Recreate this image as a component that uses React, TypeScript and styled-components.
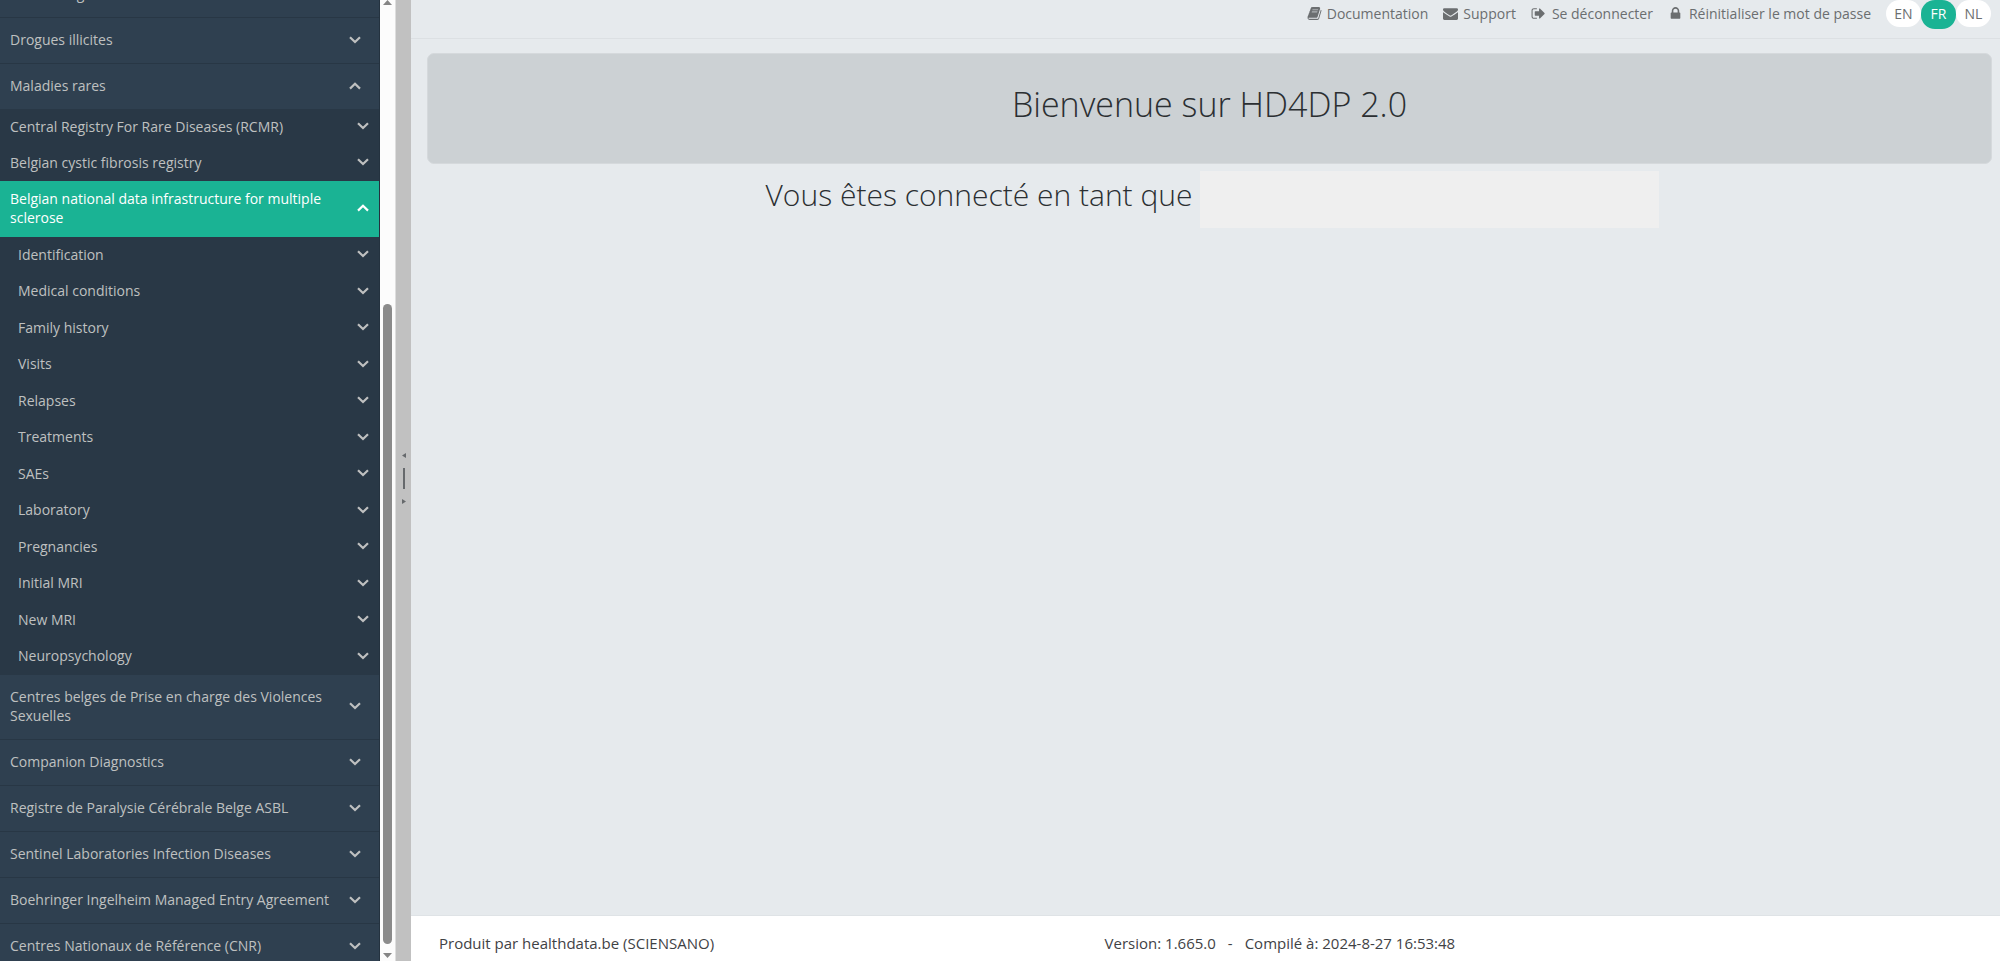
import React, { useLayoutEffect, useRef } from "react";
import styled, { createGlobalStyle } from "styled-components";

const GlobalStyle = createGlobalStyle`
  * { box-sizing: border-box; }
  body {
    margin: 0;
    overflow: hidden;
    background: #e6eaed;
    color: #3f4245;
    font-family: "Open Sans", "Liberation Sans", sans-serif;
    font-size: 14px;
    line-height: 20px;
  }
  button { font: inherit; }
  ul { list-style: none; margin: 0; padding: 0; }
`;

const Layout = styled.div`
  display: grid;
  grid-template-columns: 380px 16px 15px minmax(0, 1fr);
  height: 100vh;
`;

const Sidebar = styled.nav`
  overflow-y: auto;
  scrollbar-width: none;
  background: #2f4050;
  border-right: 1px solid #24323f;
`;

const GroupItem = styled.li`
  border-bottom: 1px solid #283745;
`;

const Submenu = styled.ul`
  background: #293846;
`;

const EntryList = styled.ul`
  display: grid;
  grid-auto-rows: 1fr;
  min-height: 438px;
`;

const NavButton = styled.button<{ $level: "group" | "registry" | "entry"; $active?: boolean }>`
  display: flex;
  align-items: center;
  justify-content: space-between;
  gap: 16px;
  width: 100%;
  height: ${(p) => (p.$level === "entry" ? "100%" : "auto")};
  min-height: ${(p) => (p.$active ? "56px" : p.$level === "group" ? "45px" : "36px")};
  padding: ${(p) =>
    p.$level === "group" ? "12px 18px 14px 10px" : p.$level === "registry" ? "7px 10px 9px 10px" : "7px 10px 9px 18px"};
  border: 0;
  background: ${(p) => (p.$active ? "#1ab394" : "transparent")};
  color: ${(p) => (p.$active ? "#ffffff" : "#bfc0c0")};
  font-size: 14px;
  line-height: 19px;
  text-align: left;
  cursor: pointer;

  svg { flex: none; }
`;

const ScrollTrack = styled.div`
  display: flex;
  flex-direction: column;
  align-items: center;
  justify-content: space-between;
  background: #fcfcfc;
  border-right: 1px solid #dedede;
`;

const ScrollThumb = styled.div`
  flex: 1;
  width: 9px;
  margin: 298px 0 8px;
  border-radius: 5px;
  background: #8b8b8b;
`;

const Splitter = styled.div`
  display: flex;
  flex-direction: column;
  align-items: center;
  justify-content: center;
  gap: 10px;
  padding-bottom: 4px;
  background: #c1c1c1;
  cursor: col-resize;
`;

const Grip = styled.span`
  width: 2px;
  height: 21px;
  background: #66696c;
`;

const Content = styled.div`
  display: flex;
  flex-direction: column;
  min-width: 0;
`;

const TopBar = styled.header`
  display: flex;
  align-items: flex-start;
  justify-content: flex-end;
  height: 39px;
  padding-right: 9px;
  border-bottom: 1px solid #dce0e3;
`;

const TopLink = styled.a<{ $gap: number }>`
  display: flex;
  align-items: center;
  gap: ${(p) => p.$gap}px;
  height: 27px;
  margin-right: 15px;
  color: #6b6e70;
  font-size: 14px;
  text-decoration: none;
  white-space: nowrap;
`;

const Languages = styled.div`
  display: flex;
  align-items: flex-start;
`;

const LanguageButton = styled.button<{ $active?: boolean }>`
  width: 35px;
  height: ${(p) => (p.$active ? 29 : 27)}px;
  padding: ${(p) => (p.$active ? "1px 0 2px" : "1px 0 0")};
  border: 0;
  border-radius: 14px;
  background: ${(p) => (p.$active ? "#1ab394" : "#ffffff")};
  color: ${(p) => (p.$active ? "#ffffff" : "#6b6e70")};
  font-size: 14px;
  line-height: 26px;
  cursor: pointer;
`;

const Main = styled.main`
  flex: 1;
  padding: 14px 8px 0 16px;
  text-align: center;
`;

const Banner = styled.section`
  padding: 26px 16px 35px;
  border: 1px solid #d5d9dc;
  border-radius: 7px;
  background: #ccd1d4;
`;

const Title = styled.h1`
  margin: 0;
  color: #2b2f32;
  font-size: 34px;
  font-weight: 300;
  line-height: 48px;
`;

const Greeting = styled.h2`
  display: flex;
  align-items: flex-start;
  justify-content: center;
  gap: 8px;
  margin: 7px 0 0;
  padding-left: 6px;
  color: #2b2f32;
  font-size: 30px;
  font-weight: 300;
  line-height: 48px;
`;

const UserName = styled.span`
  width: 459px;
  height: 57px;
  background: #efefef;
`;

const Footer = styled.footer`
  display: grid;
  grid-template-columns: 3fr 4fr;
  align-items: center;
  height: 46px;
  padding: 9px 8px 0 28px;
  border-top: 1px solid #dfe3e6;
  background: #ffffff;
  font-size: 15px;
`;

const BuildInfo = styled.div`
  display: flex;
  gap: 12px;
`;

const Chevron = ({ up }: { up?: boolean }) => (
  <svg width="12" height="8" viewBox="0 0 12 8" fill="none" stroke="currentColor" strokeWidth="2.2" aria-hidden="true">
    <path d={up ? "M1 6.6L6 1.8L11 6.6" : "M1 1.2L6 6L11 1.2"} />
  </svg>
);

const Triangle = ({ points, width, height, color }: { points: string; width: number; height: number; color: string }) => (
  <svg width={width} height={height} aria-hidden="true">
    <polygon points={points} fill={color} />
  </svg>
);

const iconPaths = {
  book: "M1703 478q40 57 18 129l-275 906q-19 64-76.5 107.5t-122.5 43.5h-923q-77 0-148.5-53.5t-99.5-131.5q-24-67-2-127 0-4 3-27t4-37q1-8-3-21.5t-3-19.5q2-11 8-21t16.5-23.5 16.5-23.5q23-38 45-91.5t30-91.5q3-10 .5-30t-.5-28q3-11 17-28t17-23q21-36 42-92t25-90q1-9-2.5-32t.5-28q4-13 22-30.5t22-22.5q19-26 42.5-84.5t27.5-96.5q1-8-3-25.5t-2-26.5q2-8 9-18t18-23 17-21q8-12 16.5-30.5t15-35 16-36 19.5-32 26.5-23.5 36-11.5 47.5 5.5l-1 3q38-9 51-9h761q74 0 114 56t18 130l-274 906q-36 119-71.5 153.5t-128.5 34.5h-869q-27 0-38 15-11 16-1 43 24 70 144 70h923q29 0 56-15.5t35-41.5l300-987q7-22 5-57 38 15 59 43zm-1064 2q-4 13 2 22.5t20 9.5h608q13 0 25.5-9.5t16.5-22.5l21-64q4-13-2-22.5t-20-9.5h-608q-13 0-25.5 9.5t-16.5 22.5zm-83 256q-4 13 2 22.5t20 9.5h608q13 0 25.5-9.5t16.5-22.5l21-64q4-13-2-22.5t-20-9.5h-608q-13 0-25.5 9.5t-16.5 22.5z",
  envelope: "M1792 710v794q0 66-47 113t-113 47h-1472q-66 0-113-47t-47-113v-794q44 49 101 87 362 246 497 345 57 42 92.5 65.5t94.5 48 110 24.5h2q51 0 110-24.5t94.5-48 92.5-65.5q170-123 498-345 57-39 100-87zm0-294q0 79-49 151t-122 123q-376 261-468 325-10 7-42.5 31t-54 38.5-52 32.5-57.5 27-50 9h-2q-23 0-50-9t-57.5-27-52-32.5-54-38.5-42.5-31q-91-64-262-182.5t-205-142.5q-62-42-117-115.5t-55-136.5q0-78 41.5-130t118.5-52h1472q65 0 112.5 47t47.5 113z",
  signOut: "M704 1440q0 4 1 20t.5 26.5-3 23.5-10 19.5-20.5 6.5h-320q-119 0-203.5-84.5t-84.5-203.5v-704q0-119 84.5-203.5t203.5-84.5h320q13 0 22.5 9.5t9.5 22.5q0 4 1 20t.5 26.5-3 23.5-10 19.5-20.5 6.5h-320q-66 0-113 47t-47 113v704q0 66 47 113t113 47h312l11.5 1 11.5 3 8 5.5 7 9 2 13.5zm928-544q0 26-19 45l-544 544q-19 19-45 19t-45-19-19-45v-288h-448q-26 0-45-19t-19-45v-384q0-26 19-45t45-19h448v-288q0-26 19-45t45-19 45 19l544 544q19 19 19 45z",
  lock: "M640 768h512v-192q0-106-75-181t-181-75-181 75-75 181v192zm832 96v576q0 40-28 68t-68 28h-960q-40 0-68-28t-28-68v-576q0-40 28-68t68-28h32v-192q0-184 132-316t316-132 316 132 132 316v192h32q40 0 68 28t28 68z",
};

const Icon = ({ name }: { name: keyof typeof iconPaths }) => (
  <svg width="15" height="15" viewBox="0 0 1792 1792" fill="currentColor" aria-hidden="true">
    {name === "book" && <path d="M640 256h860l-330 1060h-880z" opacity="0.45" />}
    <path d={iconPaths[name]} />
  </svg>
);

const topLinks: { label: string; icon: keyof typeof iconPaths; gap: number }[] = [
  { label: "Documentation", icon: "book", gap: 5 },
  { label: "Support", icon: "envelope", gap: 5 },
  { label: "Se déconnecter", icon: "signOut", gap: 6 },
  { label: "Réinitialiser le mot de passe", icon: "lock", gap: 6 },
];

const languages = ["EN", "FR", "NL"];

const registries = ["Central Registry For Rare Diseases (RCMR)", "Belgian cystic fibrosis registry"];

const entries = [
  "Identification",
  "Medical conditions",
  "Family history",
  "Visits",
  "Relapses",
  "Treatments",
  "SAEs",
  "Laboratory",
  "Pregnancies",
  "Initial MRI",
  "New MRI",
  "Neuropsychology",
];

const lowerGroups = [
  "Centres belges de Prise en charge des Violences Sexuelles",
  "Companion Diagnostics",
  "Registre de Paralysie Cérébrale Belge ASBL",
  "Sentinel Laboratories Infection Diseases",
  "Boehringer Ingelheim Managed Entry Agreement",
  "Centres Nationaux de Référence (CNR)",
];

const Group = ({ label }: { label: string }) => (
  <GroupItem>
    <NavButton $level="group" aria-expanded={false}>
      {label}
      <Chevron />
    </NavButton>
  </GroupItem>
);

const INITIAL_SCROLL = 28;

export default function App() {
  const sidebar = useRef<HTMLElement>(null);

  useLayoutEffect(() => {
    if (sidebar.current) sidebar.current.scrollTop = INITIAL_SCROLL;
  }, []);

  return (
    <>
      <GlobalStyle />
      <Layout>
        <Sidebar ref={sidebar} aria-label="Registres">
          <ul>
            <Group label="Pneumologie" />
            <Group label="Drogues illicites" />
            <li>
              <NavButton $level="group" aria-expanded>
                Maladies rares
                <Chevron up />
              </NavButton>
              <Submenu>
                {registries.map((label) => (
                  <li key={label}>
                    <NavButton $level="registry" aria-expanded={false}>
                      {label}
                      <Chevron />
                    </NavButton>
                  </li>
                ))}
                <li>
                  <NavButton $level="registry" $active aria-expanded>
                    Belgian national data infrastructure for multiple sclerose
                    <Chevron up />
                  </NavButton>
                  <EntryList>
                    {entries.map((label) => (
                      <li key={label}>
                        <NavButton $level="entry" aria-expanded={false}>
                          {label}
                          <Chevron />
                        </NavButton>
                      </li>
                    ))}
                  </EntryList>
                </li>
              </Submenu>
            </li>
            {lowerGroups.map((label) => (
              <Group key={label} label={label} />
            ))}
          </ul>
        </Sidebar>
        <ScrollTrack aria-hidden="true">
          <Triangle width={9} height={6} points="0,5 4.5,0 9,5" color="#858585" />
          <ScrollThumb />
          <Triangle width={9} height={9} points="0,1 9,1 4.5,6" color="#858585" />
        </ScrollTrack>
        <Splitter role="separator" aria-orientation="vertical">
          <Triangle width={4} height={5} points="4,0 4,5 0,2.5" color="#66696c" />
          <Grip />
          <Triangle width={4} height={5} points="0,0 0,5 4,2.5" color="#66696c" />
        </Splitter>
        <Content>
          <TopBar>
            {topLinks.map(({ label, icon, gap }) => (
              <TopLink key={label} href="#" $gap={gap}>
                <Icon name={icon} />
                {label}
              </TopLink>
            ))}
            <Languages>
              {languages.map((code) => (
                <LanguageButton key={code} $active={code === "FR"} aria-pressed={code === "FR"}>
                  {code}
                </LanguageButton>
              ))}
            </Languages>
          </TopBar>
          <Main>
            <Banner>
              <Title>Bienvenue sur HD4DP 2.0</Title>
            </Banner>
            <Greeting>
              Vous êtes connecté en tant que
              <UserName />
            </Greeting>
          </Main>
          <Footer>
            <span>Produit par healthdata.be (SCIENSANO)</span>
            <BuildInfo>
              <span>Version: 1.665.0</span>
              <span>-</span>
              <span>Compilé à: 2024-8-27 16:53:48</span>
            </BuildInfo>
          </Footer>
        </Content>
      </Layout>
    </>
  );
}
